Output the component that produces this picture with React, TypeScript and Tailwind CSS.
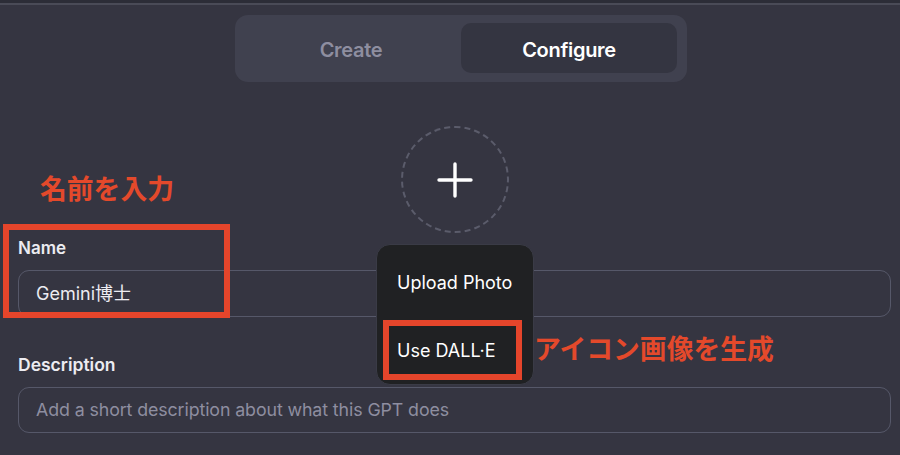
import React from "react";

const sans = { fontFamily: 'Inter, "Noto Sans CJK JP", sans-serif' };
const jp = { fontFamily: '"Noto Sans CJK JP", sans-serif' };

export default function App() {
  return (
    <div
      className="relative w-[900px] h-[455px] overflow-hidden bg-[#353541] text-[#ececf1]"
      style={sans}
    >
      {/* top edge */}
      <div className="h-[3px] bg-[#2c2d37]" />
      <div className="h-[2px] bg-[#4a4b57]" />

      {/* tabs */}
      <div className="mt-[10px] ml-[235px] w-[452px] h-[67px] rounded-[13px] bg-[#40414f] pt-[8px] pl-[8px] pr-[10px] pb-[9px] flex gap-[2px]">
        <div className="flex-1 flex items-center justify-center pt-[3px] text-[20px] font-semibold text-[#8e8ea0] tracking-[-0.3px]">
          Create
        </div>
        <div className="flex-1 flex items-center justify-center pt-[3px] rounded-[10px] bg-[#343541] text-[20px] font-semibold text-white tracking-[-0.3px]">
          Configure
        </div>
      </div>

      {/* avatar */}
      <div className="mt-[44px] ml-[401px] w-[108px] h-[107px] rounded-full border-2 border-dashed border-[#5b5c6b] flex items-center justify-center">
        <svg width="36" height="36" viewBox="0 0 36 36">
          <path d="M18 2v32M2 18h32" stroke="#ffffff" strokeWidth="3.4" strokeLinecap="round" />
        </svg>
      </div>

      {/* form */}
      <div className="pl-[18px] pr-[9px]">
        <div className="mt-[5px] h-[20px] leading-[20px] text-[17px] font-semibold">Name</div>
        <div className="mt-[12px] h-[47px] rounded-[11px] border border-[#565869] flex items-center pl-[17px] text-[18px]">
          Gemini博士
        </div>
        <div className="mt-[38px] h-[20px] leading-[20px] text-[17.5px] font-semibold">Description</div>
        <div className="mt-[12px] h-[46px] rounded-[11px] border border-[#565869] flex items-center pl-[17px] text-[17.8px] text-[#8e8ea0] tracking-[-0.1px]">
          Add a short description about what this GPT does
        </div>
      </div>

      {/* popup menu */}
      <div className="absolute left-[376px] top-[244px] w-[158px] h-[141px] rounded-[14px] bg-[#202123] border border-[#3a3b46] flex flex-col">
        <div className="h-[74px] flex items-center pl-[20px] text-[18px] text-white">Upload Photo</div>
        <div className="flex-1 flex items-center pl-[20px] text-[18px] text-white pb-[2px]">Use DALL·E</div>
      </div>

      {/* annotations */}
      <div className="absolute left-[3px] top-[224px] w-[227px] h-[94px] border-[6px] border-[#e5452b]" />
      <div className="absolute left-[383px] top-[320px] w-[139px] h-[60px] border-[6px] border-[#e5452b]" />
      <div className="absolute left-[40px] top-[175px] text-[26.8px] leading-none font-bold text-[#e4492b]" style={jp}>
        名前を入力
      </div>
      <div className="absolute left-[534px] top-[335px] text-[26.8px] leading-none font-bold text-[#e4492b]" style={jp}>
        アイコン画像を生成
      </div>
    </div>
  );
}
